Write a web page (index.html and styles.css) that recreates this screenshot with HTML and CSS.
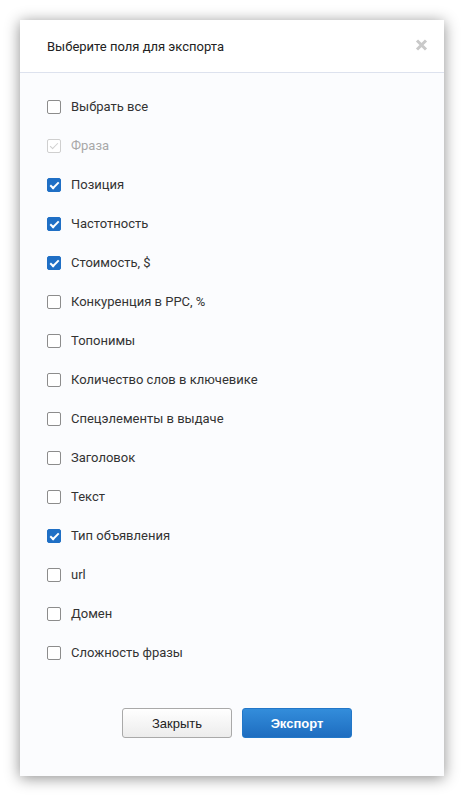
FILE: index.html
```html
<!DOCTYPE html>
<html>
	<head>
		<meta charset="utf-8"/>
		<link rel="stylesheet" href="styles.css">
		<title>Экспорт</title>
	</head>
	<body>
		<div class="dialog">
			<div class="dialog-header">
				<span class="dialog-title">Выберите поля для экспорта</span>
				<svg class="dialog-close" width="13" height="12" viewBox="0 0 13 12">
					<path d="M2 1.5 L11 10.5 M11 1.5 L2 10.5" stroke="#c9c9c9" stroke-width="3" stroke-linecap="butt"/>
				</svg>
			</div>
			<div class="dialog-body">
				<ul class="fields">
					<li class="field"><span class="box"></span>Выбрать все</li>
					<li class="field disabled"><span class="box checked"></span>Фраза</li>
					<li class="field"><span class="box checked"></span>Позиция</li>
					<li class="field"><span class="box checked"></span>Частотность</li>
					<li class="field"><span class="box checked"></span>Стоимость, $</li>
					<li class="field"><span class="box"></span>Конкуренция в PPC, %</li>
					<li class="field"><span class="box"></span>Топонимы</li>
					<li class="field"><span class="box"></span>Количество слов в ключевике</li>
					<li class="field"><span class="box"></span>Спецэлементы в выдаче</li>
					<li class="field"><span class="box"></span>Заголовок</li>
					<li class="field"><span class="box"></span>Текст</li>
					<li class="field"><span class="box checked"></span>Тип объявления</li>
					<li class="field"><span class="box"></span>url</li>
					<li class="field"><span class="box"></span>Домен</li>
					<li class="field"><span class="box"></span>Сложность фразы</li>
				</ul>
				<div class="dialog-footer">
					<button class="btn btn-close">Закрыть</button>
					<button class="btn btn-export">Экспорт</button>
				</div>
			</div>
		</div>
	</body>
</html>
```

FILE: styles.css
```css
body {
	margin: 0;
	background-color: #ffffff;
	font-family: Roboto, "Liberation Sans", sans-serif;
	color: #333333;
}
.dialog {
	width: 424px;
	height: 756px;
	margin: 20px;
	background-color: #fbfcfe;
	box-shadow: 0 2px 14px rgba(0, 0, 0, 0.45);
	display: flex;
	flex-direction: column;
}
.dialog-header {
	height: 52px;
	padding: 0 16px 0 27px;
	background-color: #ffffff;
	border-bottom: 1px solid #dde2ee;
	display: flex;
	align-items: center;
	justify-content: space-between;
}
.dialog-title {
	font-size: 13px;
	color: #222222;
}
.dialog-close {
	display: block;
	margin-top: -2px;
}
.dialog-body {
	flex: 1;
	display: flex;
	flex-direction: column;
}
.fields {
	list-style: none;
	margin: 0;
	padding: 14px 27px 0;
}
.field {
	height: 39px;
	display: flex;
	align-items: center;
	gap: 10px;
	font-size: 13px;
	color: #333333;
}
.field.disabled {
	color: #a8a8a8;
}
.box {
	width: 12px;
	height: 12px;
	border: 1px solid #8c8c8c;
	border-radius: 2px;
	background-color: #ffffff;
	position: relative;
}
.box.checked {
	background-color: #1f6fc5;
	border-color: #1f6fc5;
}
.box.checked::after {
	content: "";
	position: absolute;
	left: 4px;
	top: 1px;
	width: 3px;
	height: 7px;
	border: solid #ffffff;
	border-width: 0 2px 2px 0;
	transform: rotate(45deg);
}
.disabled .box.checked {
	background-color: #ffffff;
	border-color: #cfcfcf;
}
.disabled .box.checked::after {
	border-color: #cfcfcf;
	border-width: 0 1px 1px 0;
}
.dialog-footer {
	padding: 36px 0 0 10px;
	display: flex;
	justify-content: center;
	gap: 10px;
}
.btn {
	width: 110px;
	height: 30px;
	border-radius: 3px;
	font-family: "Liberation Sans", Arial, sans-serif;
	font-size: 13px;
	cursor: pointer;
}
.btn-close {
	background: linear-gradient(#ffffff, #ececec);
	border: 1px solid #a9a9a9;
	color: #222222;
}
.btn-export {
	background: linear-gradient(#338ddb, #1e6dc0);
	border: 1px solid #2277c8;
	color: #ffffff;
	font-weight: bold;
}
```
